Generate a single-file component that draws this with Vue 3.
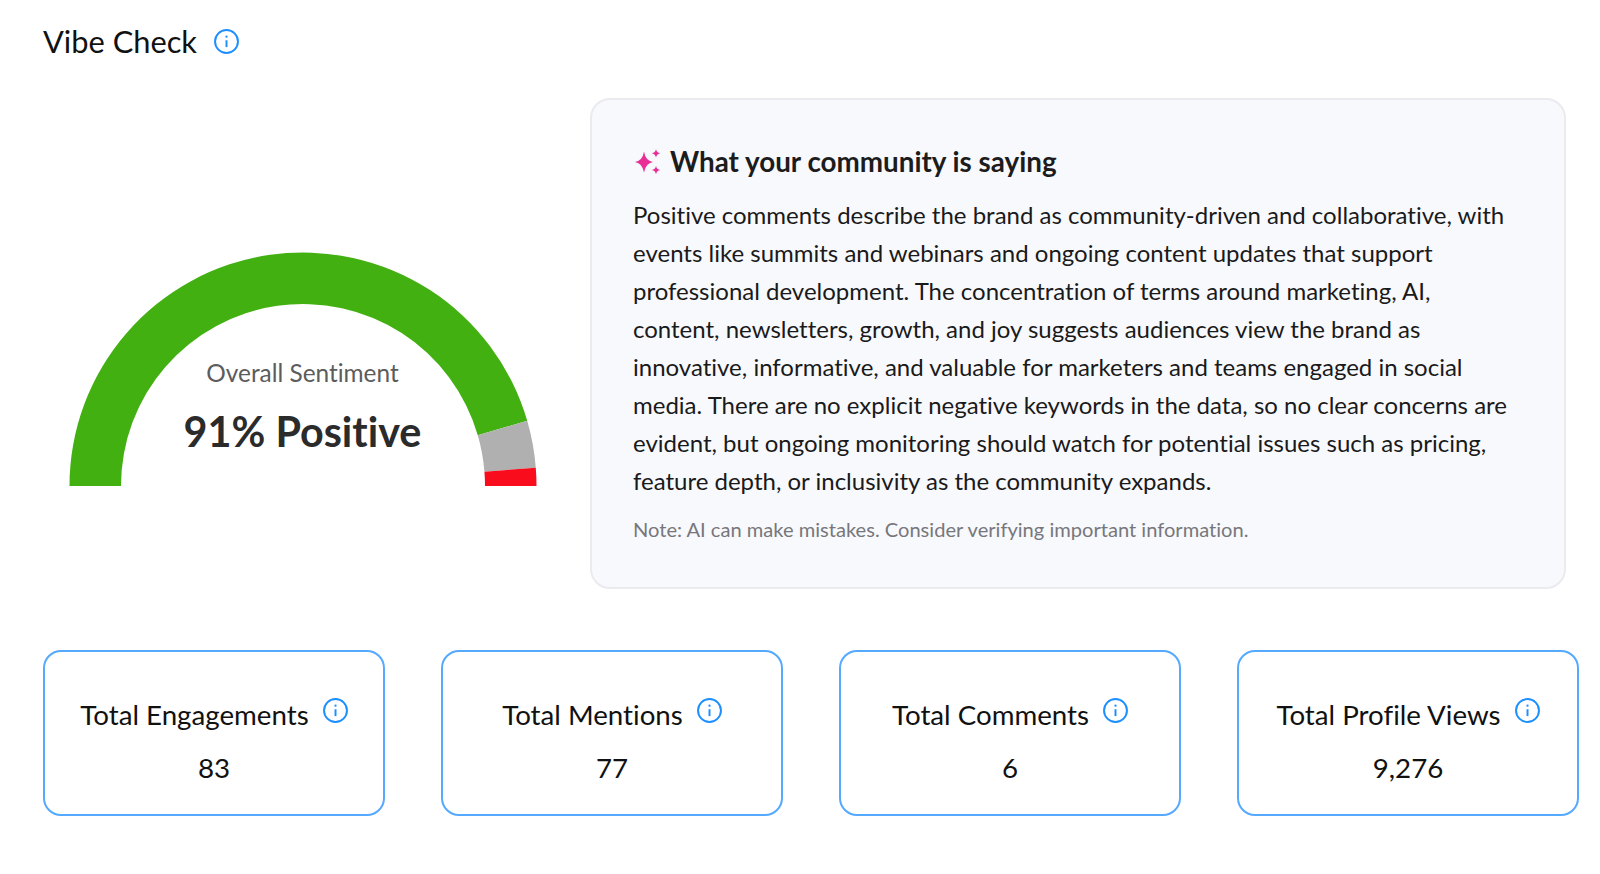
<script setup>
const segments = [
  { pct: 91, color: '#43b012' },
  { pct: 6.5, color: '#b0b0b0' },
  { pct: 2.5, color: '#f90d1d' }
]

const cx = 236
const cy = 234
const rOuter = 233.5
const rInner = 182

function point(r, deg) {
  const a = (Math.PI * deg) / 180
  return `${(cx - r * Math.cos(a)).toFixed(2)} ${(cy - r * Math.sin(a)).toFixed(2)}`
}

let start = 0
const arcs = segments.map((s) => {
  const end = start + (s.pct / 100) * 180
  const d = `M${point(rOuter, start)} A${rOuter} ${rOuter} 0 0 1 ${point(rOuter, end)} L${point(rInner, end)} A${rInner} ${rInner} 0 0 0 ${point(rInner, start)} Z`
  start = end
  return { d, color: s.color }
})

const stats = [
  { label: 'Total Engagements', value: '83' },
  { label: 'Total Mentions', value: '77' },
  { label: 'Total Comments', value: '6' },
  { label: 'Total Profile Views', value: '9,276' }
]
</script>

<template>
  <div class="page">
    <div class="heading">
      <h1>Vibe Check</h1>
      <svg class="info" viewBox="0 0 24 24">
        <circle cx="12" cy="12" r="11" />
        <line x1="12" y1="10.8" x2="12" y2="17.4" />
        <circle class="dot" cx="12" cy="7.4" r="1.1" />
      </svg>
    </div>

    <div class="top-row">
      <div class="gauge-col">
        <div class="gauge">
          <svg width="472" height="234" viewBox="0 0 472 234">
            <path v-for="arc in arcs" :key="arc.color" :d="arc.d" :fill="arc.color" />
          </svg>
          <div class="gauge-text">
            <div class="gauge-label">Overall Sentiment</div>
            <div class="gauge-value">91% Positive</div>
          </div>
        </div>
      </div>

      <section class="summary">
        <div class="summary-title">
          <svg class="sparkle" viewBox="0 0 28 28">
            <path d="M11 3.5 Q12.4 12.6 20 14 Q12.4 15.4 11 24.5 Q9.6 15.4 2 14 Q9.6 12.6 11 3.5 Z" />
            <path d="M23 1 Q23.6 4.7 27.3 5.3 Q23.6 5.9 23 9.6 Q22.4 5.9 18.7 5.3 Q22.4 4.7 23 1 Z" />
            <path d="M23 17.7 Q23.6 21.4 27.3 22 Q23.6 22.6 23 26.3 Q22.4 22.6 18.7 22 Q22.4 21.4 23 17.7 Z" />
          </svg>
          <h2>What your community is saying</h2>
        </div>
        <p class="summary-body">
          Positive comments describe the brand as community-driven and collaborative, with<br />
          events like summits and webinars and ongoing content updates that support<br />
          professional development. The concentration of terms around marketing, AI,<br />
          content, newsletters, growth, and joy suggests audiences view the brand as<br />
          innovative, informative, and valuable for marketers and teams engaged in social<br />
          media. There are no explicit negative keywords in the data, so no clear concerns are<br />
          evident, but ongoing monitoring should watch for potential issues such as pricing,<br />
          feature depth, or inclusivity as the community expands.
        </p>
        <p class="note">Note: AI can make mistakes. Consider verifying important information.</p>
      </section>
    </div>

    <div class="stats">
      <div v-for="stat in stats" :key="stat.label" class="stat-card">
        <div class="stat-label">
          <span class="stat-name">{{ stat.label }}</span>
          <svg class="info" viewBox="0 0 24 24">
            <circle cx="12" cy="12" r="11" />
            <line x1="12" y1="10.8" x2="12" y2="17.4" />
            <circle class="dot" cx="12" cy="7.4" r="1.1" />
          </svg>
        </div>
        <div class="stat-value">{{ stat.value }}</div>
      </div>
    </div>
  </div>
</template>

<style>
html,
body {
  background: #fff;
}
</style>

<style scoped>
.page {
  width: 1600px;
  box-sizing: border-box;
  padding: 0 21px 0 43px;
  font-family: Lato, "Liberation Sans", sans-serif;
  font-variant-ligatures: no-common-ligatures;
  color: #111;
}

.heading {
  display: flex;
  align-items: center;
  gap: 17px;
  height: 83px;
  margin-bottom: 15px;
}

.heading h1 {
  margin: 0;
  font-size: 30.8px;
  font-weight: 400;
}

.info {
  width: 25px;
  height: 25px;
  flex: none;
  fill: none;
  stroke: #1e8fff;
  stroke-width: 1.9;
}

.info .dot {
  fill: #1e8fff;
  stroke: none;
}

.top-row {
  display: flex;
  gap: 54px;
}

.gauge-col {
  width: 493px;
  flex: none;
  padding: 154px 0 0 23.5px;
  box-sizing: border-box;
}

.gauge {
  position: relative;
  width: 472px;
  height: 234px;
}

.gauge svg {
  display: block;
}

.gauge-text {
  position: absolute;
  left: 0;
  right: 0;
  top: 105px;
  text-align: center;
}

.gauge-label {
  font-size: 24.4px;
  line-height: 32px;
  color: #5c5c5c;
}

.gauge-value {
  margin-top: 16px;
  font-size: 41.3px;
  line-height: 52px;
  font-weight: 700;
  color: #2b2b2b;
}

.summary {
  flex: none;
  width: 976px;
  box-sizing: border-box;
  height: 491px;
  padding: 44.5px 41px 0;
  background: #f8f9fd;
  border: 2px solid #ebebef;
  border-radius: 20px;
}

.summary-title {
  display: flex;
  align-items: center;
  gap: 9px;
}

.sparkle {
  width: 28px;
  height: 28px;
  flex: none;
  fill: #e92f97;
}

.summary-title h2 {
  margin: 0;
  font-size: 27.8px;
  line-height: 34px;
  font-weight: 700;
  color: #1c1c1c;
}

.summary-body {
  margin: 17px 0 0;
  font-size: 24px;
  line-height: 38.1px;
  color: #1a1a1a;
  white-space: nowrap;
}

.note {
  margin: 15px 0 0;
  font-size: 20.1px;
  line-height: 28px;
  color: #77777b;
}

.stats {
  display: grid;
  grid-template-columns: repeat(4, 342px);
  justify-content: space-between;
  margin-top: 61px;
}

.stat-card {
  box-sizing: border-box;
  height: 166px;
  padding-top: 45px;
  border: 2px solid #55a9ff;
  border-radius: 18px;
  text-align: center;
}

.stat-label {
  display: flex;
  justify-content: center;
  align-items: flex-start;
  gap: 14px;
  font-size: 27.7px;
  line-height: 36px;
  color: #111;
}

.stat-label .info {
  margin-top: 1px;
}

.stat-value {
  margin-top: 17px;
  font-size: 27.7px;
  line-height: 36px;
  color: #111;
}
</style>
